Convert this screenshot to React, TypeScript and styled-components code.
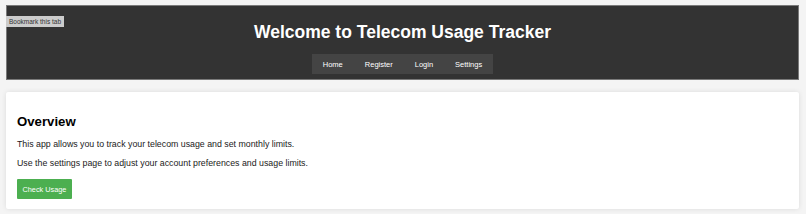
import React from "react";
import styled, { createGlobalStyle } from "styled-components";

const GlobalStyle = createGlobalStyle`
  html, body {
    margin: 0;
    padding: 0;
    background: #f4f4f4;
    font-family: "Liberation Sans", Arial, sans-serif;
  }
`;

const App = (): JSX.Element => {
  return (
    <>
      <GlobalStyle />
      <Page>
        <BookmarkTab>Bookmark this tab</BookmarkTab>
        <Header>
          <Title>Welcome to Telecom Usage Tracker</Title>
          <Nav>
            <NavLink href="#">Home</NavLink>
            <NavLink href="#">Register</NavLink>
            <NavLink href="#">Login</NavLink>
            <NavLink href="#">Settings</NavLink>
          </Nav>
        </Header>
        <Card>
          <Heading>Overview</Heading>
          <Text>This app allows you to track your telecom usage and set monthly limits.</Text>
          <Text>Use the settings page to adjust your account preferences and usage limits.</Text>
          <Button>Check Usage</Button>
        </Card>
      </Page>
    </>
  );
};

export default App;

const Page = styled.div`
  position: relative;
  padding: 5px 7px 5px 6px;
`;

const BookmarkTab = styled.div`
  position: absolute;
  top: 16px;
  left: 6px;
  height: 11px;
  padding: 0 3px;
  background: #cccccc;
  color: #333;
  font-size: 6.5px;
  line-height: 11px;
`;

const Header = styled.header`
  background: #333333;
  border: 1px solid #7a7a7a;
  padding: 16px 0 5px;
  display: flex;
  flex-direction: column;
  align-items: center;
`;

const Title = styled.h1`
  margin: 0 0 12px;
  color: #fff;
  font-size: 17.5px;
  font-weight: bold;
  line-height: 20px;
`;

const Nav = styled.nav`
  display: flex;
  background: #444444;
  height: 20px;
  align-items: center;
`;

const NavLink = styled.a`
  padding: 0 11px;
  color: #fff;
  font-size: 7.5px;
  text-decoration: none;
`;

const Card = styled.main`
  margin-top: 12px;
  background: #fff;
  padding: 22px 11px 10px;
  border-radius: 2px;
  box-shadow: 0 0 5px rgba(0, 0, 0, 0.1);
`;

const Heading = styled.h2`
  margin: 0 0 10px;
  font-size: 13.2px;
  font-weight: bold;
  color: #000;
`;

const Text = styled.p`
  margin: 0 0 9px;
  font-size: 8.8px;
  color: #1a1a1a;
`;

const Button = styled.button`
  margin-top: 2px;
  height: 20px;
  padding: 0 5.5px;
  border: none;
  border-radius: 1px;
  background: #4caf50;
  color: #fff;
  font-family: "Liberation Sans", Arial, sans-serif;
  font-size: 7.3px;
  cursor: pointer;
`;
